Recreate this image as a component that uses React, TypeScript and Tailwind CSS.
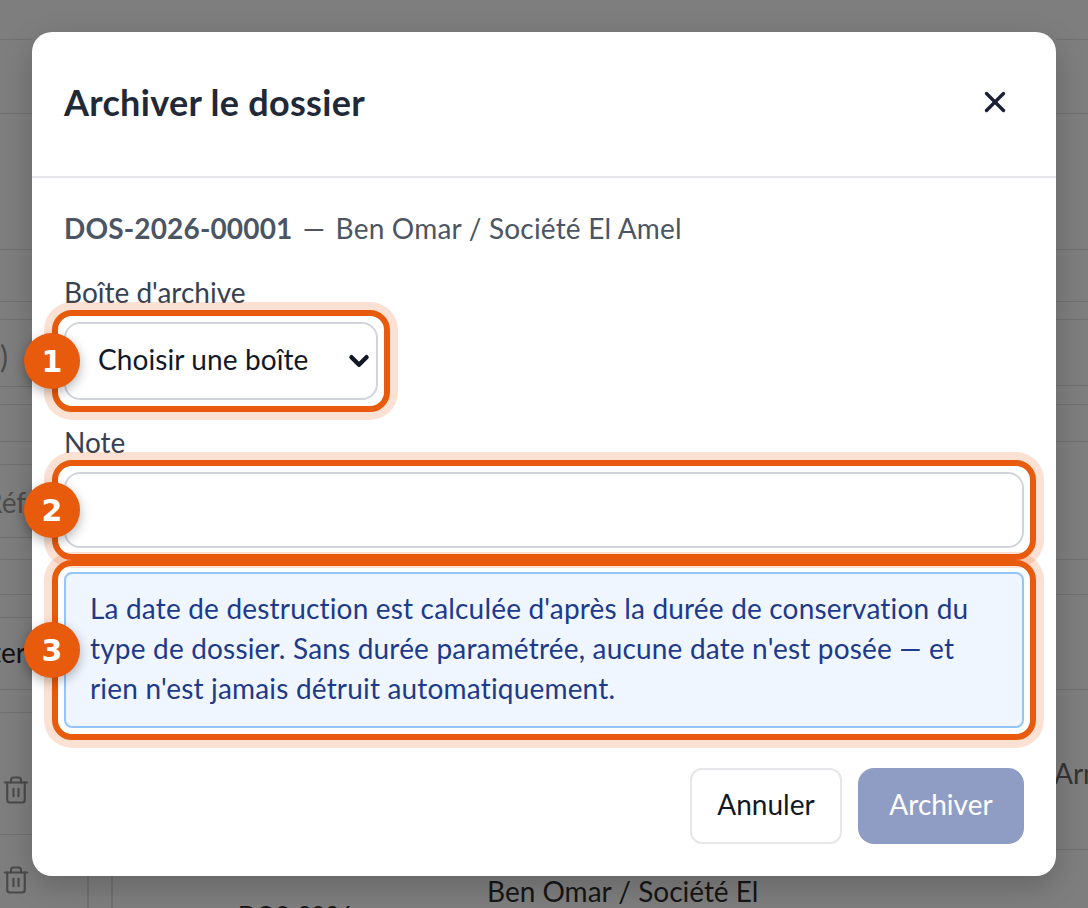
import { ChevronDown, Trash2, X } from "lucide-react";
import type { ReactNode } from "react";

const font = "font-['Lato','Noto_Sans',sans-serif]";

const leftLines = [40, 74, 136, 52, 18, 67, 18, 37, 23, 73, 22, 35, 23, 72, 23, 122];
const rightLines = [40, 74, 136, 52, 18, 66, 19, 37, 118, 35, 95, 160];

function Strip({ lines }: { lines: number[] }) {
  return (
    <div className="flex flex-col">
      {lines.map((h, i) => (
        <div key={i} className="border-b border-[#707070]" style={{ height: h }} />
      ))}
    </div>
  );
}

function Spot({ n, children }: { n: number; children: ReactNode }) {
  return (
    <div className="relative">
      {children}
      <div className="pointer-events-none absolute -inset-3 rounded-[20px] border-[6px] border-[#e85a0c] shadow-[0_0_0_8px_rgba(234,88,12,0.18)]" />
      <div className="absolute top-1/2 left-[-40px] z-10 flex h-14 w-14 -translate-y-1/2 items-center justify-center rounded-full bg-[#e85a0c] font-['DejaVu_Sans',sans-serif] text-[30px] font-bold text-white shadow-[0_4px_12px_rgba(0,0,0,0.3)]">
        {n}
      </div>
    </div>
  );
}

export default function App() {
  return (
    <div className={`relative h-[908px] w-[1088px] overflow-hidden bg-[#7e7e7e] ${font}`}>
      {/* page behind the dialog */}
      <div className="flex h-full justify-between">
        <div className="relative w-8">
          <Strip lines={leftLines} />
          <span className="absolute top-[334px] left-0 text-[30px] text-[#4a4a4a]">)</span>
          <span className="absolute top-[481px] left-[-15px] text-[28px] text-[#4d4d4d]">Réf</span>
          <span className="absolute top-[631px] left-[-9px] text-[28px] text-[#141414]">ter</span>
          <Trash2 size={30} strokeWidth={1.7} className="absolute top-[775px] left-px text-[#4a4a4a]" />
          <Trash2 size={30} strokeWidth={1.7} className="absolute top-[865px] left-px text-[#4a4a4a]" />
        </div>
        <div className="relative w-8">
          <Strip lines={rightLines} />
          <span className="absolute top-[752px] left-[-2px] text-[28px] whitespace-nowrap text-[#333]">Armé</span>
        </div>
      </div>
      <div className="absolute top-[876px] left-[87px] h-8 w-[26px] border-x-2 border-[#707070]" />
      <span className="absolute top-[870px] left-[487px] text-[28px] whitespace-nowrap text-[#161616]">Ben Omar / Société El</span>
      <span className="absolute top-[896px] left-[238px] text-[24px] whitespace-nowrap text-[#161616]">DOS-2026</span>

      {/* dialog */}
      <div className="absolute top-8 left-8 w-[1024px] rounded-[20px] bg-white shadow-[0_10px_30px_rgba(0,0,0,0.2)]">
        <div className="flex h-[146px] items-center justify-between border-b-2 border-[#e5e7eb] pr-[44px] pb-1 pl-8">
          <h2 className="text-[36px] font-bold tracking-[0.3px] text-[#1f2937]">Archiver le dossier</h2>
          <X size={34} strokeWidth={2.4} className="text-[#1a2035]" />
        </div>
        <div className="flex flex-col px-8 pt-[30px] pb-8">
          <p className="text-[28px] leading-10 tracking-[0.2px] text-[#4b5563]">
            <strong className="font-bold tracking-[0.15px]">DOS-2026-00001</strong>
            <span className="mx-[3px]"> — </span>Ben Omar / Société El Amel
          </p>
          <label className="mt-6 text-[28px] leading-10 text-[#374151]">Boîte d'archive</label>
          <div className="mt-[10px] w-[314px]">
            <Spot n={1}>
              <div className="flex h-[78px] items-center justify-between rounded-2xl border-2 border-[#d1d5db] pr-[2px] pb-1 pl-8 text-[28px] tracking-[0.1px] text-[#111827]">
                Choisir une boîte
                <ChevronDown size={30} strokeWidth={3.6} className="mt-1 text-[#111827]" />
              </div>
            </Spot>
          </div>
          <label className="mt-[22px] text-[28px] leading-10 text-[#374151]">Note</label>
          <div className="mt-[10px]">
            <Spot n={2}>
              <div className="h-[76px] rounded-2xl border-2 border-[#d1d5db]" />
            </Spot>
          </div>
          <div className="mt-6">
            <Spot n={3}>
              <div className="rounded-lg border-2 border-[#93c5fd] bg-[#eff6ff] px-6 pt-[14px] pb-[18px] text-[28px] leading-10 tracking-[0.18px] text-[#1e3a8a]">
                La date de destruction est calculée d'après la durée de conservation du type de dossier. Sans durée paramétrée, aucune date n'est posée — et rien n'est jamais détruit automatiquement.
              </div>
            </Spot>
          </div>
          <div className="mt-10 flex justify-end gap-4">
            <button type="button" className="h-[76px] w-[152px] rounded-xl border-2 border-[#e5e7eb] pb-1 text-[28px] text-[#111827]">
              Annuler
            </button>
            <button type="button" className="h-[76px] w-[166px] rounded-2xl bg-[#8f9cc4] pb-1 text-[28px] text-white">
              Archiver
            </button>
          </div>
        </div>
      </div>
    </div>
  );
}
